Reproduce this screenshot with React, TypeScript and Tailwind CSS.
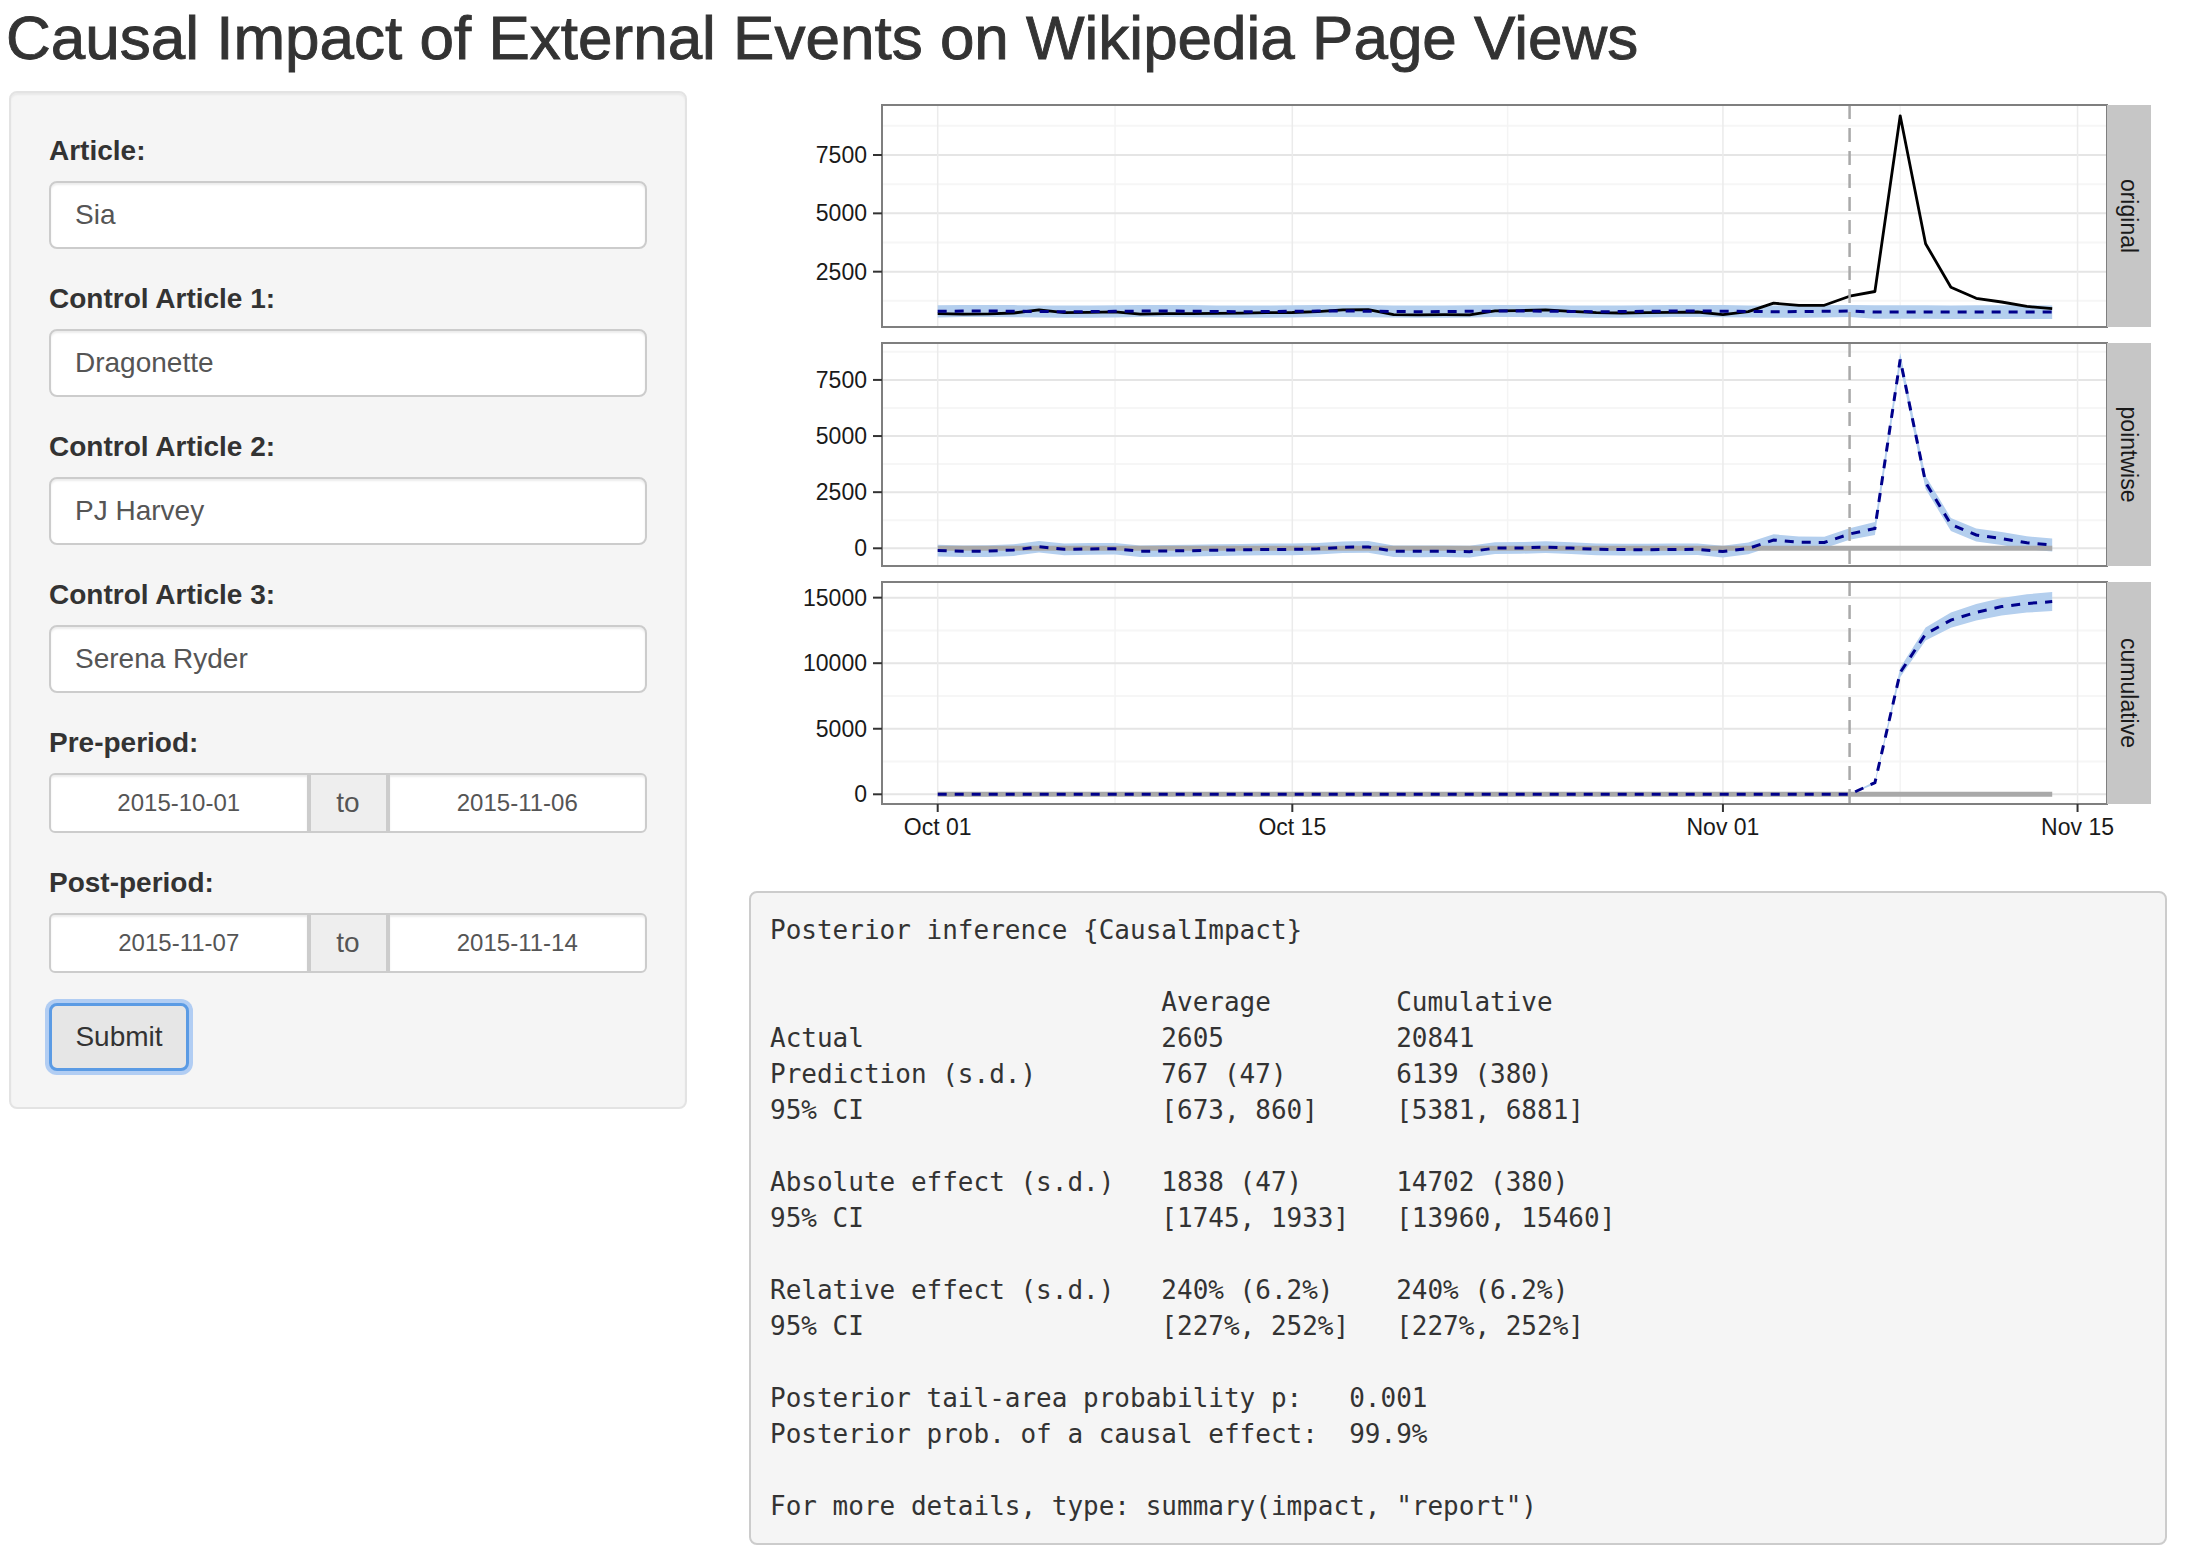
import React from 'react';

// series, day 0 = 2015-10-01 ... day 44 = 2015-11-14
const actualPre = [700, 680, 690, 730, 860, 740, 760, 780, 680, 700, 700, 710, 720, 740, 750, 790, 860, 870, 660, 650, 655, 650, 820, 830, 860, 800, 740, 730, 740, 760, 770, 660, 790, 1150, 1060, 1060, 1450];
const actualPost = [1650, 9180, 3700, 1830, 1360, 1200, 1010, 911];
const predPost = [768, 770, 768, 766, 767, 767, 767, 766];
const cumHalf = [110, 360, 500, 580, 630, 670, 700, 730];

const actual = [...actualPre, ...actualPost];
const days = actual.map((_, i) => i);
const pred = days.map((d) => (d < 37 ? 800 + 15 * Math.sin(d * 0.9) : predPost[d - 37]));
const point = days.map((d) => actual[d] - pred[d]);
const cum: number[] = [];
days.forEach((d) => {
  const prev = d > 0 ? cum[d - 1] : 0;
  cum.push(d < 37 ? 0 : prev + point[d]);
});
const half = days.map((d) => (d < 37 ? 260 : 290));

const X0 = 188.7;
const DX = 25.33;
const xd = (d: number) => X0 + DX * d;
const PX1 = 133;
const PX2 = 1358;

type Panel = { top: number; bottom: number; y0: number; k: number; label: string; major: number[]; minor: number[] };
const panels: Panel[] = [
  { top: 14, bottom: 236, y0: 239, k: 0.02333, label: 'original', major: [2500, 5000, 7500], minor: [1250, 3750, 6250, 8750] },
  { top: 252, bottom: 475, y0: 457.3, k: 0.02245, label: 'pointwise', major: [0, 2500, 5000, 7500], minor: [1250, 3750, 6250, 8750] },
  { top: 491, bottom: 713, y0: 703.3, k: 0.01311, label: 'cumulative', major: [0, 5000, 10000, 15000], minor: [2500, 7500, 12500] },
];

const line = (vals: number[], p: Panel, from = 0) =>
  vals
    .map((v, i) => [i, v] as const)
    .filter(([i]) => i >= from)
    .map(([i, v]) => `${xd(i).toFixed(1)},${(p.y0 - v * p.k).toFixed(1)}`)
    .join(' ');

const ribbon = (mid: number[], hw: number[], p: Panel, from = 0) => {
  const idx = days.filter((d) => d >= from);
  const up = idx.map((d) => `${xd(d).toFixed(1)},${(p.y0 - (mid[d] + hw[d]) * p.k).toFixed(1)}`);
  const lo = idx.reverse().map((d) => `${xd(d).toFixed(1)},${(p.y0 - (mid[d] - hw[d]) * p.k).toFixed(1)}`);
  return [...up, ...lo].join(' ');
};

function ImpactPlot() {
  const cumHw = days.map((d) => (d < 37 ? 0 : cumHalf[d - 37]));
  return (
    <svg width="1418" height="800" viewBox="0 0 1418 800" className="block" fontFamily="'Liberation Sans', Arial, sans-serif">
      <defs>
        {panels.map((p, i) => (
          <clipPath key={i} id={`clip${i}`}>
            <rect x={PX1} y={p.top} width={PX2 - PX1} height={p.bottom - p.top} />
          </clipPath>
        ))}
      </defs>
      {panels.map((p, i) => (
        <g key={i}>
          <rect x={PX1} y={p.top} width={PX2 - PX1} height={p.bottom - p.top} fill="#ffffff" />
          <g clipPath={`url(#clip${i})`}>
            {p.minor.map((v) => (
              <line key={`mn${v}`} x1={PX1} x2={PX2} y1={p.y0 - v * p.k} y2={p.y0 - v * p.k} stroke="#f6f6f6" strokeWidth="2" />
            ))}
            {[7, 22.5, 38].map((d) => (
              <line key={`mv${d}`} x1={xd(d)} x2={xd(d)} y1={p.top} y2={p.bottom} stroke="#f4f4f4" strokeWidth="1.5" />
            ))}
            {p.major.map((v) => (
              <line key={`mj${v}`} x1={PX1} x2={PX2} y1={p.y0 - v * p.k} y2={p.y0 - v * p.k} stroke="#e5e5e5" strokeWidth="2" />
            ))}
            {[0, 14, 31, 45].map((d) => (
              <line key={`jv${d}`} x1={xd(d)} x2={xd(d)} y1={p.top} y2={p.bottom} stroke="#ebebeb" strokeWidth="1.5" />
            ))}
            {i === 0 && (
              <>
                <polygon points={ribbon(pred, half, p)} fill="#b4cfee" />
                <polyline points={line(actual, p)} fill="none" stroke="#000000" strokeWidth="2.8" strokeLinejoin="round" />
                <polyline points={line(pred, p)} fill="none" stroke="#00008b" strokeWidth="3" strokeDasharray="9 8" />
              </>
            )}
            {i === 1 && (
              <>
                <polygon points={ribbon(point, half, p)} fill="#b4cfee" />
                <line x1={xd(0)} x2={xd(44)} y1={p.y0} y2={p.y0} stroke="#a9a9a9" strokeWidth="5" />
                <polyline points={line(point, p)} fill="none" stroke="#00008b" strokeWidth="3" strokeDasharray="9 8" />
              </>
            )}
            {i === 2 && (
              <>
                <polygon points={ribbon(cum, cumHw, p, 36)} fill="#b4cfee" />
                <line x1={xd(0)} x2={xd(44)} y1={p.y0} y2={p.y0} stroke="#a9a9a9" strokeWidth="5" />
                <polyline points={line(cum, p)} fill="none" stroke="#00008b" strokeWidth="3" strokeDasharray="9 8" />
              </>
            )}
            <line x1={xd(36)} x2={xd(36)} y1={p.top} y2={p.bottom} stroke="#a9a9a9" strokeWidth="2.5" strokeDasharray="14 9" />
          </g>
          <rect x={PX1} y={p.top} width={PX2 - PX1} height={p.bottom - p.top} fill="none" stroke="#7f7f7f" strokeWidth="2" />
          <rect x={PX2} y={p.top} width={44} height={p.bottom - p.top} fill="#c6c6c6" />
          <text
            x={PX2 + 22}
            y={(p.top + p.bottom) / 2}
            textAnchor="middle"
            dominantBaseline="central"
            fontSize="23"
            fill="#1a1a1a"
            transform={`rotate(90 ${PX2 + 22} ${(p.top + p.bottom) / 2})`}
          >
            {p.label}
          </text>
          {p.major.map((v) => (
            <g key={`yl${v}`}>
              <line x1={124} x2={PX1} y1={p.y0 - v * p.k} y2={p.y0 - v * p.k} stroke="#333333" strokeWidth="2" />
              <text x={118} y={p.y0 - v * p.k} textAnchor="end" dominantBaseline="central" fontSize="23" fill="#1a1a1a">
                {v}
              </text>
            </g>
          ))}
        </g>
      ))}
      {[
        [0, 'Oct 01'],
        [14, 'Oct 15'],
        [31, 'Nov 01'],
        [45, 'Nov 15'],
      ].map(([d, t]) => (
        <g key={t as string}>
          <line x1={xd(d as number)} x2={xd(d as number)} y1={713} y2={721} stroke="#333333" strokeWidth="2" />
          <text x={xd(d as number)} y={736} textAnchor="middle" dominantBaseline="central" fontSize="23" fill="#1a1a1a">
            {t}
          </text>
        </g>
      ))}
    </svg>
  );
}

const row = (a: string, b: string, c: string) => a.padEnd(25) + b.padEnd(15) + c;

const summary = [
  'Posterior inference {CausalImpact}',
  '',
  row('', 'Average', 'Cumulative'),
  row('Actual', '2605', '20841'),
  row('Prediction (s.d.)', '767 (47)', '6139 (380)'),
  row('95% CI', '[673, 860]', '[5381, 6881]'),
  '',
  row('Absolute effect (s.d.)', '1838 (47)', '14702 (380)'),
  row('95% CI', '[1745, 1933]', '[13960, 15460]'),
  '',
  row('Relative effect (s.d.)', '240% (6.2%)', '240% (6.2%)'),
  row('95% CI', '[227%, 252%]', '[227%, 252%]'),
  '',
  'Posterior tail-area probability p:   0.001',
  'Posterior prob. of a causal effect:  99.9%',
  '',
  'For more details, type: summary(impact, "report")',
].join('\n');

function TextField({ label, value }: { label: string; value: string }) {
  return (
    <div className="mb-[30px]">
      <label className="block font-bold text-[28px] leading-[40px] mb-[10px] text-[#333]">{label}</label>
      <div className="h-[68px] flex items-center px-[24px] bg-white border-2 border-[#cccccc] rounded-[8px] shadow-[inset_0_2px_2px_rgba(0,0,0,0.075)] text-[28px] text-[#555]">
        {value}
      </div>
    </div>
  );
}

function DateRange({ label, from, to }: { label: string; from: string; to: string }) {
  return (
    <div className="mb-[30px]">
      <label className="block font-bold text-[28px] leading-[40px] mb-[10px] text-[#333]">{label}</label>
      <div className="flex h-[60px]">
        <div className="flex-1 flex items-center justify-center bg-white border-2 border-[#cccccc] rounded-l-[6px] text-[24px] text-[#555] shadow-[inset_0_2px_2px_rgba(0,0,0,0.075)]">
          {from}
        </div>
        <div className="w-[79px] flex items-center justify-center bg-[#eeeeee] border-2 border-[#cccccc] text-[28px] text-[#555]">to</div>
        <div className="flex-1 flex items-center justify-center bg-white border-2 border-[#cccccc] rounded-r-[6px] text-[24px] text-[#555] shadow-[inset_0_2px_2px_rgba(0,0,0,0.075)]">
          {to}
        </div>
      </div>
    </div>
  );
}

export default function App() {
  return (
    <div className="w-[2188px] h-[1562px] bg-white overflow-hidden font-['Liberation_Sans',Arial,sans-serif] text-[#333]">
      <h2 className="pt-[5px] pl-[6px] text-[62px] leading-[66px] font-normal mb-[20px] text-[#333] whitespace-nowrap [-webkit-text-stroke:0.9px_#333]">
        Causal Impact of External Events on Wikipedia Page Views
      </h2>
      <div className="flex items-start pl-[9px]">
        <div className="w-[678px] shrink-0 bg-[#f5f5f5] border-2 border-[#e3e3e3] rounded-[8px] p-[38px] pb-[36px] shadow-[inset_0_2px_2px_rgba(0,0,0,0.05)]">
          <TextField label="Article:" value="Sia" />
          <TextField label="Control Article 1:" value="Dragonette" />
          <TextField label="Control Article 2:" value="PJ Harvey" />
          <TextField label="Control Article 3:" value="Serena Ryder" />
          <DateRange label="Pre-period:" from="2015-10-01" to="2015-11-06" />
          <DateRange label="Post-period:" from="2015-11-07" to="2015-11-14" />
          <button className="h-[68px] w-[140px] bg-[#e6e6e6] border-[3px] border-[#5b9be4] rounded-[8px] shadow-[0_0_0_4px_rgba(120,172,240,0.55)] text-[28px] text-[#333]">
            Submit
          </button>
        </div>
        <div className="ml-[62px] w-[1418px] shrink-0">
          <ImpactPlot />
          <pre className="bg-[#f5f5f5] border-2 border-[#cccccc] rounded-[8px] p-[19px] font-['DejaVu_Sans_Mono',Menlo,monospace] text-[26px] leading-[36px] text-[#333] whitespace-pre">
            {summary}
          </pre>
        </div>
      </div>
    </div>
  );
}
